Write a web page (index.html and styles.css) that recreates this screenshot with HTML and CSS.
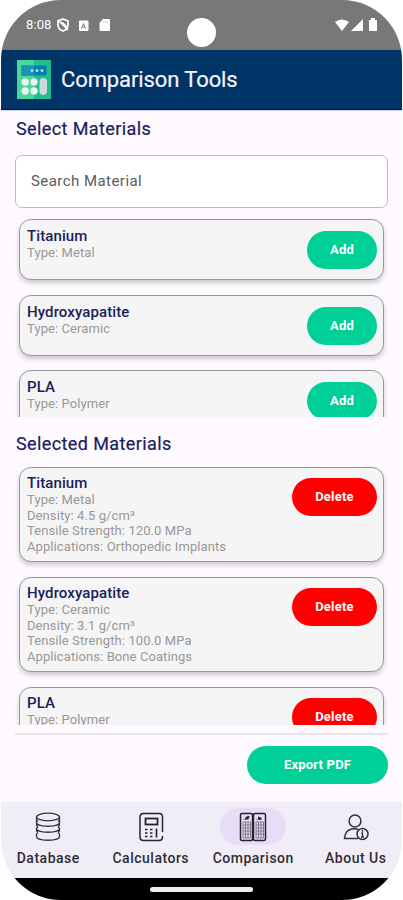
FILE: index.html
```html
<!DOCTYPE html>
<html lang="en">
<head>
<meta charset="utf-8">
<title>Comparison Tools</title>
<link rel="stylesheet" href="styles.css">
</head>
<body>
<div class="phone">
  <div class="status">
    <span class="clock">8:08</span>
    <svg class="status-left" width="60" height="16" viewBox="0 0 60 16">
      <path d="M7 2 12 4v4c0 3-2 5-5 6-3-1-5-3-5-6V4z" fill="none" stroke="#fff" stroke-width="1.7"/>
      <path d="M2 3 12 13M6 5l5 5" stroke="#fff" stroke-width="1.5"/>
      <rect x="23" y="3.500" width="9.500" height="10.500" rx="1" fill="#fff"/>
      <path d="M25.5 11.5 27.500 6.500 29.500 11.500M26.200 10h2.600" fill="none" stroke="#777" stroke-width="1"/>
      <path d="M47 2h6q1 0 1 1V13q0 1-1 1H44.500q-1 0-1-1V6z" fill="#fff"/>
      <path d="M47 4v2M49 4v2M51 4v2" stroke="#bbb" stroke-width=".6"/>
    </svg>
    <span class="camera"></span>
    <svg class="status-right" width="44" height="14" viewBox="0 0 44 14">
      <path d="M0 4Q7-1 14 4L7 13zM28 1v12H16zM34 2h2V0h4v2h2v11h-8z" fill="#fff"/>
    </svg>
  </div>
  <header class="appbar">
    <svg width="34" height="39" viewBox="0 0 34 39">
      <path d="M0 0h34v39H0z" fill="#20bd91"/><path d="M0 0h17v39H0z" fill="#4bd796"/>
      <path d="M4.500 5.500h25v10h-25z" fill="#087eaa"/><path d="M4.500 5.500h12.500v10H4.500z" fill="#1795b4"/>
      <g fill="#a9ddec"><circle cx="15" cy="10.500" r="1.500"/><circle cx="20" cy="10.500" r="1.500"/><circle cx="25" cy="10.500" r="1.500"/></g>
      <g fill="#e9f5ef"><circle cx="8.200" cy="22" r="3.700"/><circle cx="17" cy="22" r="3.700"/><circle cx="8.200" cy="31" r="3.700"/><circle cx="17" cy="31" r="3.700"/></g>
      <rect x="22.500" y="18" width="7.500" height="17" rx="3.700" fill="#ced6df"/>
    </svg>
    <h1>Comparison Tools</h1>
  </header>
  <main>
    <h2 class="select-title">Select Materials</h2>
    <div class="search">Search Material</div>
    <section class="list available">
      <article class="card"><div><h3>Titanium</h3><p>Type: Metal</p></div><span class="btn add">Add</span></article>
      <article class="card"><div><h3>Hydroxyapatite</h3><p>Type: Ceramic</p></div><span class="btn add">Add</span></article>
      <article class="card"><div><h3>PLA</h3><p>Type: Polymer</p></div><span class="btn add">Add</span></article>
    </section>
    <h2 class="selected-title">Selected Materials</h2>
    <section class="list selected">
      <article class="card"><div><h3>Titanium</h3><p>Type: Metal</p><p>Density: 4.5 g/cm³</p><p>Tensile Strength: 120.0 MPa</p><p>Applications: Orthopedic Implants</p></div><span class="btn delete">Delete</span></article>
      <article class="card"><div><h3>Hydroxyapatite</h3><p>Type: Ceramic</p><p>Density: 3.1 g/cm³</p><p>Tensile Strength: 100.0 MPa</p><p>Applications: Bone Coatings</p></div><span class="btn delete">Delete</span></article>
      <article class="card"><div><h3>PLA</h3><p>Type: Polymer</p></div><span class="btn delete">Delete</span></article>
    </section>
    <div class="actions"><span class="btn export">Export PDF</span></div>
  </main>
  <nav>
    <div class="tab"><span class="icon"><svg width="30" height="30" viewBox="0 0 30 30">
      <g fill="none" stroke="#333139" stroke-width="1.300"><ellipse cx="15" cy="5" rx="11.500" ry="3.800"/><path d="M3.500 5v5.500c0 5 23 5 23 0V5M3.500 10.500c0-.8.500-1.500 1.500-2M26.500 10.500c0-.8-.5-1.500-1.500-2M5 14.500c-1 .5-1.500 1.200-1.500 2 0 5 23 5 23 0 0-.8-.5-1.500-1.500-2M3.500 10.500v2q0 1 1.500 2M26.500 10.500v2q0 1-1.500 2M3.500 16.500v2q0 1 1.500 2M26.500 16.500v2q0 1-1.500 2M5 20.500q-1.500 1-1.500 2v2c0 5 23 5 23 0v-2q0-1-1.500-2"/></g>
    </svg></span><b>Database</b></div>
    <div class="tab"><span class="icon"><svg width="30" height="30" viewBox="0 0 30 30">
      <path d="M26.500 20V5q0-3.500-3.500-3.500H7.500Q4 1.500 4 5v20q0 3.500 3.500 3.500H23q3.500 0 3.500-3.500v-1" fill="none" stroke="#28242e" stroke-width="1.500"/>
      <rect x="9.500" y="6.500" width="12" height="6" fill="none" stroke="#28242e" stroke-width="1.800"/>
      <path d="M9 17.500h2.500M14 17.500h2.500M9 21h2.500M14 21h2.500M9 24.500h2.500M14 24.500h2.500M20.500 16.500v9" stroke="#28242e" stroke-width="1.700"/>
    </svg></span><b>Calculators</b></div>
    <div class="tab"><span class="icon active"><svg width="30" height="30" viewBox="0 0 30 30">
      <g fill="none" stroke="#25202d"><rect x="2.500" y="1.500" width="12" height="27" rx="1.500" stroke-width="1.500"/><rect x="15.500" y="1.500" width="12" height="27" rx="1.500" stroke-width="1.500"/>
      <path d="M5 10h7.500v16H5zM7.500 10v16M10 10v16M5 13h7.500M5 16h7.500M5 19h7.500M5 22h7.500M18 10h7.500v16H18zM20.500 10v16M23 10v16M18 13h7.500M18 16h7.500M18 19h7.500M18 22h7.500" stroke="#777184" stroke-width=".9"/>
      <path d="M5 7.500h6M18 7.500h6" stroke="#8f899a" stroke-width="1"/></g>
      <path d="M7 7q0-3 4.500-3 0 4-4.500 3M20 4.500l4 1.500-2 2-2-1z" fill="#25202d"/>
    </svg></span><b>Comparison</b></div>
    <div class="tab"><span class="icon"><svg width="30" height="30" viewBox="0 0 30 30">
      <g fill="none" stroke="#34303b" stroke-width="1.500"><circle cx="14" cy="9" r="5.900"/><path d="M17 17.500Q15 16.500 11 17q-7 1-7.500 9.500H17"/><circle cx="21.500" cy="22" r="5.500"/></g>
      <path d="M21.500 18v1.800M20.300 21h1.200v4M20 25h3" fill="none" stroke="#34303b" stroke-width="1.400"/>
    </svg></span><b>About Us</b></div>
  </nav>
  <footer><i></i></footer>
</div>
</body>
</html>
```
FILE: styles.css
```css
* { box-sizing: border-box; margin: 0; padding: 0; }
body { width: 403px; height: 900px; overflow: hidden; background: #fff; font-family: Roboto, sans-serif; }
.phone { width: 401px; height: 900px; margin-left: 1px; border-radius: 60px; overflow: hidden; background: #fefaff; display: flex; flex-direction: column; }
.status { height: 50px; flex: none; background: #787878; display: grid; grid-template-columns: 30px 131px 29px 1fr 44px; padding: 0 23px 0 25px; color: #fff; }
.clock { font-size: 13px; line-height: 50px; letter-spacing: .1px; }
.status-left { margin: 17px 0 0; }
.camera { width: 29px; height: 29px; margin-top: 18px; border-radius: 50%; background: #fff; }
.status-right { grid-column: 5; margin-top: 18px; }
.appbar { height: 60px; flex: none; background: #003366; border-bottom: 1px solid #100c66; display: flex; align-items: center; padding-left: 16px; gap: 10px; }
.appbar h1 { color: #f5f3ff; font-size: 22px; line-height: 28px; font-weight: 400; letter-spacing: -.1px; -webkit-text-stroke: .2px #f5f3ff; }
main { height: 692px; flex: none; border-top: 1px solid #d5d7ee; padding: 0 15px 0 14px; }
h2 { color: #17215c; font-size: 18px; font-weight: 400; line-height: 24px; letter-spacing: .4px; padding-left: 1px; -webkit-text-stroke: .2px #17215c; }
.select-title { margin: 6px 0 14px; }
.search { height: 53px; margin-right: -1px; border: 1px solid #bdbbbf; border-radius: 7px; background: #fff; color: #5d5b60; font-size: 15px; line-height: 51px; padding-left: 15px; letter-spacing: .45px; }
.list { overflow: hidden; margin: 0 -8px; padding: 0 11px 0 12px; }
.available { height: 206px; padding-top: 8px; margin-top: 3px; }
.card { height: 61px; margin-bottom: 14.5px; border: 1px solid #98979c; border-radius: 12px; background: #f5f5f5; display: flex; justify-content: space-between; padding: 7px 6px 7px 7px; box-shadow: 0 3px 5px #0003; }
.card h3 { color: #19215d; font-size: 15px; font-weight: 500; line-height: 18px; letter-spacing: .1px; }
.card p { color: #98979a; font-size: 13px; line-height: 15.6px; letter-spacing: .09px; white-space: nowrap; }
.btn { display: block; height: 38px; line-height: 37px; border-radius: 19px; text-align: center; color: #fff; font-weight: 700; font-size: 13px; background: #00cf98; flex: none; letter-spacing: .2px; }
.add { width: 70px; margin-top: 4px; }
.delete { width: 85px; margin-top: 4px; background: #f00; }
.selected-title { margin-top: 15px; }
.selected { height: 269px; padding-top: 11px; }
.selected .card { height: 95px; margin-bottom: 15px; padding-top: 6px; }
.actions { margin-top: 8px; margin-right: -1px; border-top: 2px solid #e7e3ea; padding-top: 11px; }
.export { width: 141px; margin-left: auto; }
nav { height: 76px; flex: none; background: #f1edf7; display: grid; grid-template-columns: repeat(4, 102.5px); margin-left: -4px; margin-right: -5px; }
.tab { display: flex; flex-direction: column; align-items: center; padding-top: 6px; }
.icon { width: 66px; height: 37px; border-radius: 19px; display: grid; place-items: center; }
.active { background: #e6def6; }
.tab b { color: #302d35; font-size: 14px; line-height: 18px; font-weight: 500; letter-spacing: .5px; margin-top: 4px; white-space: nowrap; }
footer { height: 22px; flex: none; background: #000; display: flex; justify-content: center; padding-top: 9px; }
footer i { width: 103px; height: 5px; border-radius: 3px; background: #eee; }
```
